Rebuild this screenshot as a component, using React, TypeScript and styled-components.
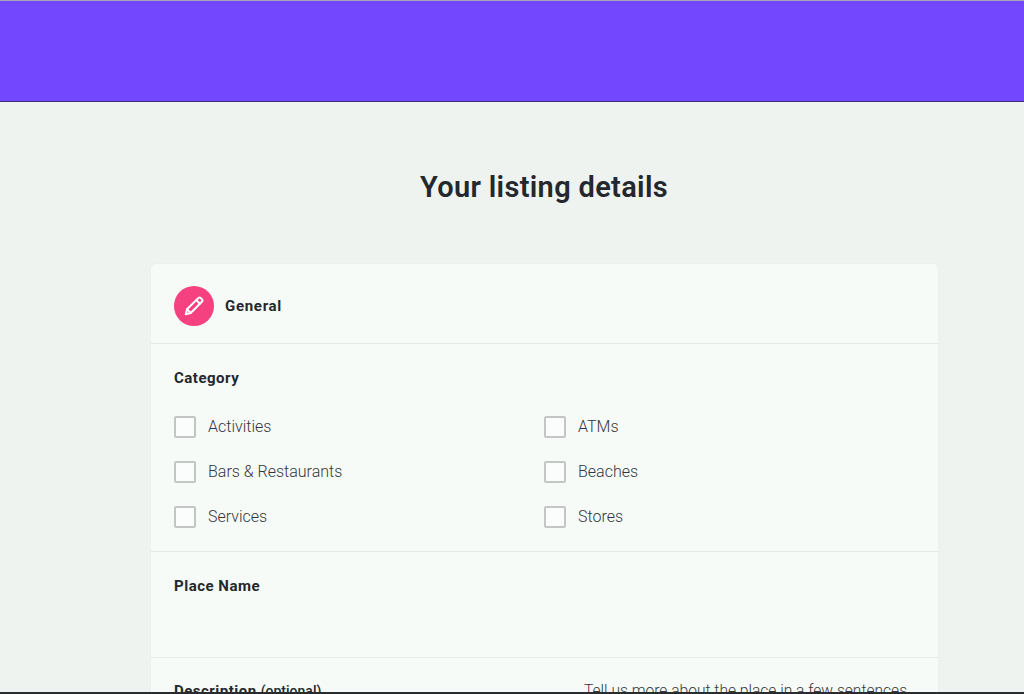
import React from "react";
import styled, { createGlobalStyle } from "styled-components";

const Global = createGlobalStyle`
  html, body { margin: 0; padding: 0; height: 694px; overflow: hidden; background: #eef3f0; }
  body { font-family: Roboto, "Liberation Sans", sans-serif; color: #24282d; }
  #root { height: 694px; overflow: hidden; }
  * { box-sizing: border-box; }
`;

const Page = styled.div`
  position: relative;
  height: 694px;
  overflow: hidden;
  display: flex;
  flex-direction: column;
  background: #eef3f0;
`;

const TopBar = styled.header`
  flex: none;
  height: 102px;
  background: #7247fe;
  border-top: 1px solid #a9a3b8;
  border-bottom: 1px solid #3b2d7a;
`;

const BottomEdge = styled.div`
  position: absolute;
  left: 0;
  right: 0;
  bottom: 0;
  height: 2px;
  background: #2a2c30;
`;

const Title = styled.h1`
  flex: none;
  margin: 0;
  padding-top: 67px;
  height: 162px;
  padding-left: 64px;
  text-align: center;
  font-size: 29px;
  line-height: 36px;
  font-weight: 600;
  letter-spacing: 0.33px;
  color: #24282d;
`;

const Card = styled.section`
  flex: none;
  width: 787px;
  margin-left: 151px;
  background: #f7fbf8;
  border-radius: 5px 5px 0 0;
  box-shadow: 0 0 2px rgba(0, 0, 0, 0.06);
`;

const CardHeader = styled.div`
  display: flex;
  align-items: center;
  gap: 11px;
  height: 80px;
  padding: 4px 23px 0;
  border-bottom: 1px solid #e6eae7;
`;

const IconCircle = styled.div`
  width: 40px;
  height: 40px;
  border-radius: 50%;
  background: #f5417f;
  display: flex;
  align-items: center;
  justify-content: center;
`;

const HeaderLabel = styled.span`
  font-size: 15px;
  font-weight: 700;
  letter-spacing: 0.7px;
`;

const Section = styled.div<{ $height: number }>`
  height: ${(p) => p.$height}px;
  padding: 25px 23px 0;
  border-bottom: 1px solid #e6eae7;
`;

const FieldLabel = styled.div`
  font-size: 15px;
  line-height: 18px;
  font-weight: 700;
  letter-spacing: 0.5px;
`;

const Optional = styled.span`
  font-size: 14px;
  font-weight: 500;
  margin-left: 4px;
  letter-spacing: 0;
`;

const OptionGrid = styled.div`
  display: grid;
  grid-template-columns: 370px 1fr;
  grid-auto-rows: 45px;
  padding-top: 17px;
`;

const Option = styled.label`
  display: flex;
  align-items: center;
  gap: 12px;
  font-size: 16px;
  font-weight: 300;
  color: #33373b;
`;

const Box = styled.span`
  width: 22px;
  height: 22px;
  border: 2px solid #c3c6c4;
  border-radius: 2px;
  background: #fbfdfc;
`;

const DescriptionRow = styled.div`
  display: flex;
  padding: 24px 23px 0;
`;

const DescriptionLabel = styled(FieldLabel)`
  width: 410px;
`;

const Hint = styled.div`
  font-size: 15.6px;
  line-height: 18px;
  font-weight: 300;
  color: #33373b;
`;

const options = ["Activities", "ATMs", "Bars & Restaurants", "Beaches", "Services", "Stores"];

export default function App() {
  return (
    <Page>
      <Global />
      <TopBar />
      <Title>Your listing details</Title>
      <Card>
        <CardHeader>
          <IconCircle>
            <svg width="22" height="22" viewBox="0 0 24 24" fill="none" stroke="#fff" strokeWidth="2.2" strokeLinejoin="round" strokeLinecap="round">
              <path d="M3 21l1.4-5.4L16.6 3.4a2 2 0 0 1 2.8 0l1.2 1.2a2 2 0 0 1 0 2.8L8.4 19.6 3 21z" />
              <path d="M14.5 5.5l4 4" />
              <path d="M4.4 15.6l4 4" />
            </svg>
          </IconCircle>
          <HeaderLabel>General</HeaderLabel>
        </CardHeader>
        <Section $height={208}>
          <FieldLabel>Category</FieldLabel>
          <OptionGrid>
            {options.map((o) => (
              <Option key={o}>
                <Box />
                {o}
              </Option>
            ))}
          </OptionGrid>
        </Section>
        <Section $height={106}>
          <FieldLabel>Place Name</FieldLabel>
        </Section>
        <DescriptionRow>
          <DescriptionLabel>
            Description<Optional>(optional)</Optional>
          </DescriptionLabel>
          <Hint>Tell us more about the place in a few sentences</Hint>
        </DescriptionRow>
      </Card>
      <BottomEdge />
    </Page>
  );
}
